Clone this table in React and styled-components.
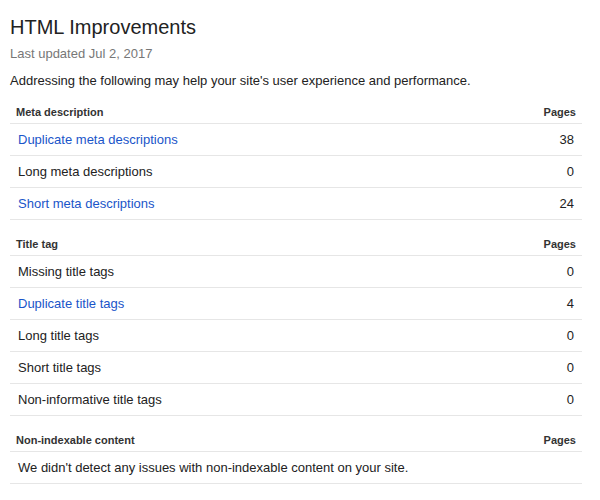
import React from "react";
import styled, { createGlobalStyle } from "styled-components";

const Global = createGlobalStyle`
  html, body { margin: 0; padding: 0; background: #fff; }
  body { font-family: "Liberation Sans", Arial, sans-serif; color: #222; }
`;

const Page = styled.div`
  padding: 15px 10px 10px;
  width: 572px;
`;

const Title = styled.h1`
  margin: 0;
  font-size: 20px;
  line-height: 24px;
  font-weight: normal;
  color: #222;
`;

const Updated = styled.div`
  margin-top: 6px;
  font-size: 13px;
  line-height: 18px;
  color: #777;
`;

const Intro = styled.p`
  margin: 9px 0 0;
  font-size: 13px;
  line-height: 18px;
  color: #222;
`;

const Table = styled.div`
  display: flex;
  flex-direction: column;
`;

const HeadRow = styled.div`
  display: flex;
  justify-content: space-between;
  align-items: flex-end;
  box-sizing: content-box;
  height: ${(p) => (p.$first ? "30px" : "32px")};
  padding: 0 6px 3px;
  border-bottom: 1px solid #e6e6e6;
  font-size: 11px;
  line-height: 15px;
  font-weight: bold;
  color: #333;
`;

const Row = styled.div`
  display: flex;
  justify-content: space-between;
  align-items: center;
  height: 31px;
  padding: 0 8px;
  border-bottom: 1px solid #e6e6e6;
  font-size: 13px;
  color: #222;
`;

const Label = styled.span`
  color: ${(p) => (p.$link ? "#1a55c9" : "#222")};
  cursor: ${(p) => (p.$link ? "pointer" : "default")};
`;

const Count = styled.span`
  text-align: right;
`;

const sections = [
  {
    title: "Meta description",
    rows: [
      ["Duplicate meta descriptions", 38, true],
      ["Long meta descriptions", 0, false],
      ["Short meta descriptions", 24, true],
    ],
  },
  {
    title: "Title tag",
    rows: [
      ["Missing title tags", 0, false],
      ["Duplicate title tags", 4, true],
      ["Long title tags", 0, false],
      ["Short title tags", 0, false],
      ["Non-informative title tags", 0, false],
    ],
  },
  {
    title: "Non-indexable content",
    empty: "We didn't detect any issues with non-indexable content on your site.",
  },
];

export default function App() {
  return (
    <>
      <Global />
      <Page>
        <Title>HTML Improvements</Title>
        <Updated>Last updated Jul 2, 2017</Updated>
        <Intro>
          Addressing the following may help your site's user experience and performance.
        </Intro>
        <Table>
          {sections.map((s, i) => (
            <React.Fragment key={s.title}>
              <HeadRow $first={i === 0}>
                <span>{s.title}</span>
                <span>Pages</span>
              </HeadRow>
              {s.rows
                ? s.rows.map(([label, n, link]) => (
                    <Row key={label}>
                      <Label $link={link}>{label}</Label>
                      <Count>{n}</Count>
                    </Row>
                  ))
                : (
                  <Row>
                    <Label>{s.empty}</Label>
                  </Row>
                )}
            </React.Fragment>
          ))}
        </Table>
      </Page>
    </>
  );
}
